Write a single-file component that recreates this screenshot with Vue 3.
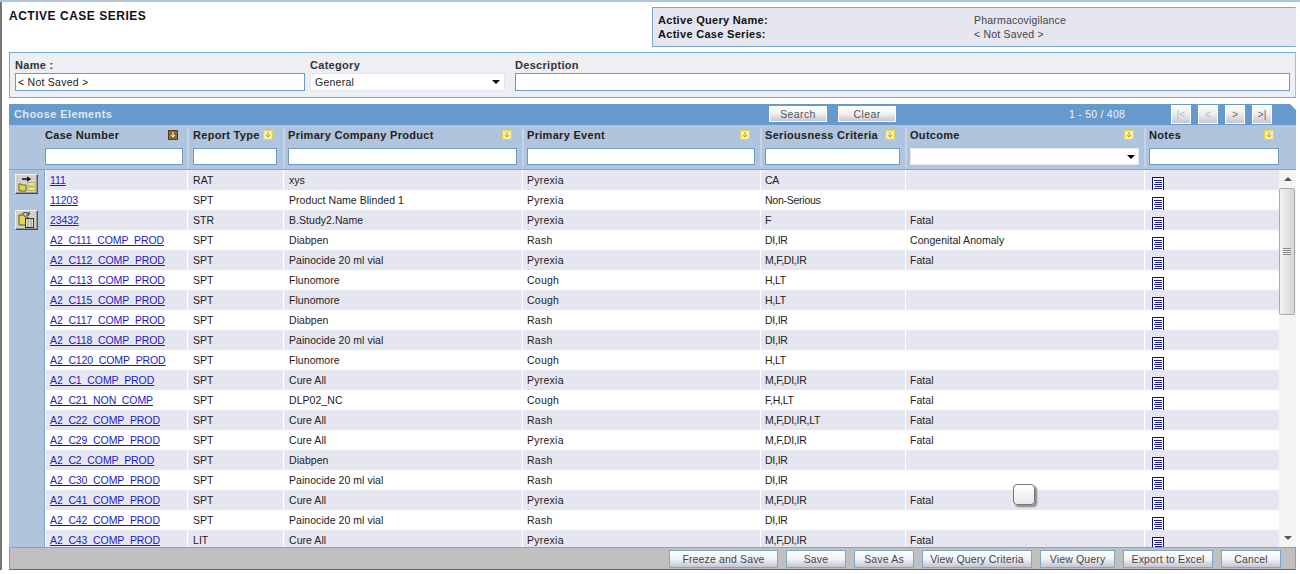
<script setup>
const columns = [
  { label: 'Case Number', active: true },
  { label: 'Report Type' },
  { label: 'Primary Company Product' },
  { label: 'Primary Event' },
  { label: 'Seriousness Criteria' },
  { label: 'Outcome', select: true },
  { label: 'Notes' }
]
const rows = [
  ['111', 'RAT', 'xys', 'Pyrexia', 'CA', ''],
  ['11203', 'SPT', 'Product Name Blinded 1', 'Pyrexia', 'Non-Serious', ''],
  ['23432', 'STR', 'B.Study2.Name', 'Pyrexia', 'F', 'Fatal'],
  ['A2_C111_COMP_PROD', 'SPT', 'Diabpen', 'Rash', 'DI,IR', 'Congenital Anomaly'],
  ['A2_C112_COMP_PROD', 'SPT', 'Painocide 20 ml vial', 'Pyrexia', 'M,F,DI,IR', 'Fatal'],
  ['A2_C113_COMP_PROD', 'SPT', 'Flunomore', 'Cough', 'H,LT', ''],
  ['A2_C115_COMP_PROD', 'SPT', 'Flunomore', 'Cough', 'H,LT', ''],
  ['A2_C117_COMP_PROD', 'SPT', 'Diabpen', 'Rash', 'DI,IR', ''],
  ['A2_C118_COMP_PROD', 'SPT', 'Painocide 20 ml vial', 'Rash', 'DI,IR', ''],
  ['A2_C120_COMP_PROD', 'SPT', 'Flunomore', 'Cough', 'H,LT', ''],
  ['A2_C1_COMP_PROD', 'SPT', 'Cure All', 'Pyrexia', 'M,F,DI,IR', 'Fatal'],
  ['A2_C21_NON_COMP', 'SPT', 'DLP02_NC', 'Cough', 'F,H,LT', 'Fatal'],
  ['A2_C22_COMP_PROD', 'SPT', 'Cure All', 'Rash', 'M,F,DI,IR,LT', 'Fatal'],
  ['A2_C29_COMP_PROD', 'SPT', 'Cure All', 'Pyrexia', 'M,F,DI,IR', 'Fatal'],
  ['A2_C2_COMP_PROD', 'SPT', 'Diabpen', 'Rash', 'DI,IR', ''],
  ['A2_C30_COMP_PROD', 'SPT', 'Painocide 20 ml vial', 'Rash', 'DI,IR', ''],
  ['A2_C41_COMP_PROD', 'SPT', 'Cure All', 'Pyrexia', 'M,F,DI,IR', 'Fatal'],
  ['A2_C42_COMP_PROD', 'SPT', 'Painocide 20 ml vial', 'Rash', 'DI,IR', ''],
  ['A2_C43_COMP_PROD', 'LIT', 'Cure All', 'Pyrexia', 'M,F,DI,IR', 'Fatal']
]
const pager = [
  { t: '|<', off: true },
  { t: '<', off: true },
  { t: '>' },
  { t: '>|' }
]
const actions = [
  ['Freeze and Save', 109],
  ['Save', 60],
  ['Save As', 60],
  ['View Query Criteria', 110],
  ['View Query', 75],
  ['Export to Excel', 90],
  ['Cancel', 60]
]
</script>

<template>
  <div class="page">
    <header class="top">
      <h1 class="title">ACTIVE CASE SERIES</h1>
      <div class="query">
        <div class="query-row"><b>Active Query Name:</b><span>Pharmacovigilance</span></div>
        <div class="query-row"><b>Active Case Series:</b><span>&lt; Not Saved &gt;</span></div>
      </div>
    </header>

    <section class="form">
      <label class="field">
        <span class="lbl">Name :</span>
        <input class="inp" value="< Not Saved >" readonly />
      </label>
      <div class="field">
        <span class="lbl">Category</span>
        <div class="sel"><span>General</span><i class="tri"></i></div>
      </div>
      <label class="field">
        <span class="lbl">Description</span>
        <input class="inp" readonly />
      </label>
    </section>

    <section class="panel">
      <div class="band">
        <span class="band-title">Choose Elements</span>
        <div class="band-btns">
          <button class="btn-light">Search</button>
          <button class="btn-light">Clear</button>
        </div>
        <span class="count">1 - 50 / 408</span>
        <div class="pager">
          <button v-for="p in pager" :key="p.t" class="pg" :class="{ off: p.off }">{{ p.t }}</button>
        </div>
      </div>

      <div class="thead">
        <div v-for="c in columns" :key="c.label" class="th">
          <div class="th-top">
            <span>{{ c.label }}</span>
            <svg class="sort" :class="{ active: c.active }" viewBox="0 0 10 10" width="10" height="10">
              <rect x="0.5" y="0.5" width="9" height="9" class="sort-box" />
              <path d="M5 2v5M3 5l2 2 2-2" class="sort-arrow" fill="none" />
            </svg>
          </div>
          <div v-if="c.select" class="sel head-in"><span></span><i class="tri"></i></div>
          <input v-else class="inp head-in" readonly />
        </div>
      </div>

      <div class="tbody">
        <aside class="tools">
          <button class="tool">
            <svg viewBox="0 0 21 18" width="21" height="18">
              <path d="M3 9h2l1 1h4v6H3z" fill="#e6d44e" stroke="#6c6430" />
              <path d="M6 4h7M11 2l3 2-3 2" fill="none" stroke="#111" stroke-width="1.3" />
              <rect x="12" y="7.5" width="7" height="3.5" fill="#f4ec50" stroke="#8a8a70" stroke-width=".5" />
              <rect x="12" y="12" width="7" height="3.5" fill="#f4ec50" stroke="#8a8a70" stroke-width=".5" />
            </svg>
          </button>
          <button class="tool">
            <svg viewBox="0 0 21 18" width="21" height="18">
              <path d="M3 4h5l1 2h3v8H3z" fill="#e6d44e" stroke="#5c5420" />
              <path d="M6 3c2-2 5-2 7 0M13 1v3h-3" fill="none" stroke="#222" />
              <rect x="9.5" y="7.5" width="8" height="9" fill="#e4e4d0" stroke="#333" />
              <path d="M12 8v8M15 8v8" stroke="#888" />
            </svg>
          </button>
        </aside>

        <div class="rows">
          <div v-for="r in rows" :key="r[0]" class="tr">
            <div class="td"><a href="#" class="case">{{ r[0] }}</a></div>
            <div v-for="(v, i) in r.slice(1)" :key="i" class="td">{{ v }}</div>
            <div class="td">
              <svg class="note" viewBox="0 0 12 14" width="12" height="14">
                <rect x=".5" y=".5" width="11" height="13" fill="#fff" stroke="#0a0a70" />
                <path d="M2 3.5h8M3 5.5h7M2 7.5h8M3 9.5h7M2 11.5h8" stroke="#1a1a9c" />
              </svg>
            </div>
          </div>
        </div>

        <div class="scroll">
          <div class="sc-btn"><i class="sc-up"></i></div>
          <div class="track">
            <div class="thumb"><i></i></div>
          </div>
          <div class="sc-btn"><i class="sc-down"></i></div>
        </div>
      </div>

      <footer class="actions">
        <button v-for="a in actions" :key="a[0]" class="act" :style="{ width: a[1] + 'px' }">{{ a[0] }}</button>
      </footer>
    </section>

    <div class="floating"></div>
  </div>
</template>

<style scoped>
.page {
  position: relative;
  box-sizing: border-box;
  width: 1300px;
  height: 574px;
  border-top: 2px solid #b0c4de;
  padding: 0 4px 0 9px;
  font-family: "Liberation Sans", Arial, sans-serif;
  font-size: 10.5px;
  letter-spacing: 0.05px;
  color: #222;
  background: linear-gradient(#777, #777) 0 0 / 2px 568px no-repeat #fff;
}
.top {
  display: flex;
  justify-content: space-between;
  align-items: flex-start;
  padding-top: 5px;
}
.title {
  margin: 2px 0 0;
  font-size: 12px;
  font-weight: bold;
  letter-spacing: 0.52px;
  color: #111;
}
.query {
  box-sizing: border-box;
  width: 644px;
  height: 40px;
  padding: 5px 5px;
  background: #e6e6f0;
  border: 1px solid #7ba7cf;
  border-right-color: #e6e6f0;
  line-height: 14px;
}
.query-row { display: flex; }
.query-row b { width: 316px; font-size: 11px; letter-spacing: 0.3px; color: #111; }
.query-row span { color: #444; letter-spacing: .2px; }
.form {
  box-sizing: border-box;
  display: grid;
  grid-template-columns: 290px 195px 1fr;
  column-gap: 5px;
  height: 46px;
  margin-top: 5px;
  padding: 1px 5px 0;
  background: #eeeef5;
  border: 1px solid #7ba7cf;
  border-right-color: #9dbfdc;
}
.form .field:last-child { margin-left: 5px; }
.field { display: flex; flex-direction: column; min-width: 0; }
.lbl {
  height: 19px;
  line-height: 22px;
  font-size: 11px;
  font-weight: bold;
  letter-spacing: 0.3px;
  color: #333;
}
.inp, .sel {
  box-sizing: border-box;
  display: flex;
  align-items: center;
  width: 100%;
  height: 18px;
  margin: 0;
  padding: 0 2px;
  border: 1px solid #6e9bc4;
  background: #fff;
  font: inherit;
  letter-spacing: .25px;
  color: #222;
  outline: none;
}
.sel { justify-content: space-between; padding: 0 4px; border-color: #e6e6f0; }
.tri {
  display: block;
  width: 0;
  height: 0;
  border-left: 4px solid transparent;
  border-right: 4px solid transparent;
  border-top: 4px solid #000;
}
.panel { margin-top: 6px; }
.band {
  display: flex;
  align-items: center;
  box-sizing: border-box;
  height: 21px;
  padding: 0 0 2px 5px;
  background: #6699cc;
  clip-path: polygon(0 0, calc(100% - 6px) 0, 100% 6px, 100% 100%, 0 100%);
  color: #fff;
}
.band-title {
  width: 755px;
  font-size: 11px;
  font-weight: bold;
  letter-spacing: 0.4px;
  color: #dfe8f4;
}
.band-btns { display: flex; gap: 11px; width: 300px; }
.btn-light {
  box-sizing: border-box;
  width: 58px;
  height: 16px;
  padding: 0;
  border: 1px solid #fff;
  background: linear-gradient(#fff, #f2f2f6 45%, #c6c6d6);
  font: inherit;
  letter-spacing: .4px;
  color: #555;
}
.count {
  width: 102px;
  color: #f0f4fa;
  letter-spacing: .25px;
}
.pager { display: flex; gap: 7px; margin-top: 1px; }
.pg {
  box-sizing: border-box;
  width: 20px;
  height: 19px;
  padding: 0;
  border: 1px solid #fff;
  background: linear-gradient(#fff, #eaeaf0 50%, #c8c8d6);
  font: inherit;
  color: #666;
}
.pg.off { color: #bbb; }
.thead, .tr {
  display: grid;
  grid-template-columns: 142px 96px 239px 238px 145px 239px 135px;
}
.thead {
  height: 45px;
  padding-left: 36px;
  background: #b0c4de;
  border-bottom: 1px solid #7ba7cf;
  box-sizing: border-box;
}
.th {
  box-sizing: border-box;
  display: flex;
  flex-direction: column;
  padding: 0 5px 0 3px;
  border-left: 2px solid #c6d4e7;
  margin: 3px 0 2px;
}
.th:first-child { padding-left: 0; padding-right: 4px; border-left: 0; }
.th:nth-child(2) { padding: 0 6px 0 4px; }
.th:nth-child(2) .th-top { padding-right: 4px; }
.th:last-child { padding-right: 0; }
.th-top {
  display: flex;
  justify-content: space-between;
  align-items: center;
  height: 14px;
  padding-right: 5px;
  font-size: 11px;
  font-weight: bold;
  letter-spacing: 0.3px;
  color: #222;
}
.head-in { height: 17px; margin-top: 6px; }
.sel.head-in { padding: 0 3px 0 2px; width: 100%; }
.sort { flex: none; }
.sort-box { fill: #f6f0a0; stroke: #ddd35a; }
.sort-arrow { stroke: #b8a632; }
.sort.active .sort-box { fill: #8a6d2e; stroke: #54401a; }
.sort.active .sort-arrow { stroke: #fff; }
.tbody {
  display: flex;
  height: 377px;
  overflow: hidden;
}
.tools {
  box-sizing: border-box;
  flex: none;
  width: 36px;
  padding: 4px 0 0 6px;
  display: flex;
  flex-direction: column;
  gap: 16px;
  background: #b0c4de;
  border-right: 1px solid #7ba7cf;
}
.tool {
  box-sizing: border-box;
  width: 23px;
  height: 20px;
  padding: 0;
  background: #d4d0c8;
  border: 1px solid;
  border-color: #f4f4f0 #555 #444 #f4f4f0;
  box-shadow: inset -1px -1px 0 #999;
  overflow: hidden;
  display: block;
}
.tool svg { display: block; }
.rows { flex: none; width: 1234px; background: #fff; }
.tr { height: 20px; }
.tr:nth-child(odd) { background: #e6e6f0; }
.td {
  box-sizing: border-box;
  padding-left: 4px;
  border-left: 1px solid #fff;
  line-height: 20px;
  white-space: nowrap;
  overflow: hidden;
}
.td:nth-child(2), .td:nth-child(3) { padding-left: 5px; }
.td:nth-child(4) { letter-spacing: .25px; }
.td:nth-child(5) { letter-spacing: -0.25px; }
.case { color: #1a1acc; text-decoration: underline; letter-spacing: -0.1px; }
.note { display: block; margin: 7px 0 0 3px; shape-rendering: crispEdges; }
.scroll {
  flex: none;
  width: 17px;
  display: flex;
  flex-direction: column;
  background: #f4f4f2;
}
.sc-btn {
  height: 18px;
  display: flex;
  align-items: center;
  justify-content: center;
  flex: none;
}
.sc-up, .sc-down {
  width: 0;
  height: 0;
  border-left: 4px solid transparent;
  border-right: 4px solid transparent;
}
.sc-up { border-bottom: 4px solid #555; }
.sc-down { border-top: 4px solid #555; }
.track { flex: 1; }
.thumb {
  box-sizing: border-box;
  width: 16px;
  height: 127px;
  display: flex;
  align-items: center;
  justify-content: center;
  background: linear-gradient(90deg, #f2f2f2, #d6d6d6);
  border: 1px solid #aaa;
  border-radius: 2px;
}
.thumb i {
  display: block;
  width: 8px;
  height: 7px;
  background: repeating-linear-gradient(#888 0 1px, #eee 1px 2px);
}
.actions {
  box-sizing: border-box;
  display: flex;
  justify-content: flex-end;
  gap: 8px;
  height: 23px;
  padding: 2px 14px 0 0;
  background: #c0c0c0;
  border: 1px solid #999;
  border-top-color: #7ba7cf;
  border-bottom-color: #666;
}
.act {
  box-sizing: border-box;
  height: 18px;
  padding: 0;
  border: 1px solid #7fa8c8;
  background: linear-gradient(#fff, #f2f2f6 50%, #c4c4d6);
  font: inherit;
  letter-spacing: .15px;
  color: #444;
}
.floating {
  position: absolute;
  left: 1013px;
  top: 482px;
  width: 22px;
  height: 21px;
  box-sizing: border-box;
  border: 1px solid #777;
  border-radius: 4px;
  background: linear-gradient(#fff, #e8e8ec);
  box-shadow: 2px 2px 2px #888;
}
</style>
